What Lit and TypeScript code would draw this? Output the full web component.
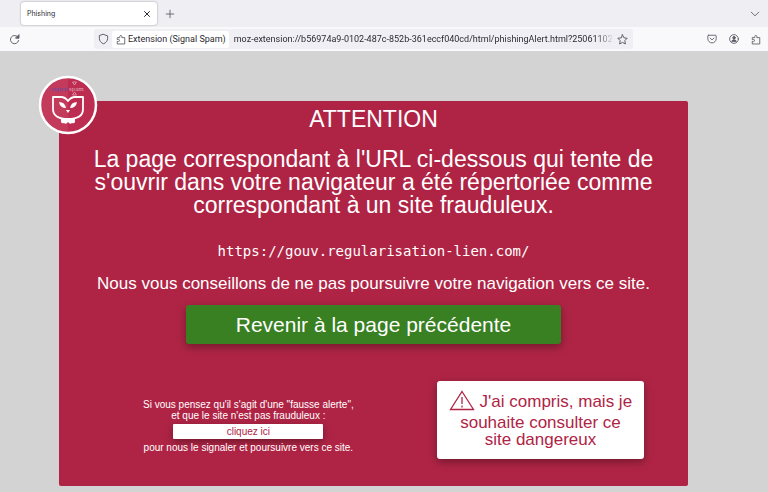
import { LitElement, html, css, svg } from "lit";
import { customElement } from "lit/decorators.js";

const puzzle = svg`<path d="M2 14.500v-3.500h2.200a1.500 1.500 0 0 0 0-3H2V5h4V3.300a1.700 1.700 0 0 1 3.400 0V5H14v9.500z" />`;

@customElement("browser-chrome")
class BrowserChrome extends LitElement {
  static styles = css`
    :host {
      display: block;
      font-family: Roboto, "Liberation Sans", sans-serif;
      color: #2b2a33;
    }
    button {
      border: 0;
      padding: 0;
      background: none;
      color: inherit;
      font: inherit;
      display: flex;
      align-items: center;
      justify-content: center;
    }
    svg {
      display: block;
      fill: none;
      stroke: #5b5b66;
      stroke-width: 1.4;
      stroke-linejoin: round;
      stroke-linecap: round;
    }
    .tabs {
      display: flex;
      align-items: center;
      height: 27px;
      padding: 0 8px 0 21px;
      background: #efeef3;
    }
    .tab {
      display: flex;
      align-items: center;
      justify-content: space-between;
      width: 136px;
      height: 23px;
      box-sizing: border-box;
      padding: 0 6px;
      border-radius: 3px;
      background: #fff;
      box-shadow: 0 0 2px rgba(0, 0, 0, 0.4);
      font-family: Inter, sans-serif;
      font-size: 7px;
    }
    .close {
      stroke: #2b2a33;
      stroke-width: 2;
    }
    .add {
      margin: 0 auto 0 8px;
    }
    .bar {
      display: flex;
      align-items: center;
      height: 24px;
      padding: 0 7px 0 9px;
      background: #f9f9fb;
    }
    .address {
      display: flex;
      align-items: center;
      flex: 1;
      min-width: 0;
      height: 20px;
      margin: 0 74px;
      padding: 0 5px 0 4px;
      gap: 3px;
      border-radius: 3px;
      background: #f0f0f4;
      font-size: 9px;
    }
    .badge {
      flex: none;
      height: 17px;
      gap: 2px;
      margin-right: 2px;
      padding: 0 3px 0 4px;
      border-radius: 2px;
      background: #fff;
    }
    .url {
      flex: 1;
      min-width: 0;
      border: 0;
      padding: 0;
      background: none;
      color: #2b2a33;
      font: inherit;
      outline: 0;
      -webkit-mask-image: linear-gradient(to left, transparent, #000 18px);
      mask-image: linear-gradient(to left, transparent, #000 18px);
    }
    .tools {
      display: flex;
      gap: 12px;
    }
  `;

  render() {
    return html`
      <div class="tabs">
        <div class="tab">
          <span>Phishing</span>
          <button aria-label="Fermer l'onglet">
            <svg class="close" width="8" height="8" viewBox="0 0 16 16"><path d="M3 3l10 10M13 3L3 13" /></svg>
          </button>
        </div>
        <button class="add" aria-label="Nouvel onglet">
          <svg width="10" height="10" viewBox="0 0 16 16"><path d="M8 2v12M2 8h12" /></svg>
        </button>
        <button aria-label="Lister les onglets">
          <svg width="10" height="10" viewBox="0 0 16 16"><path d="M2 5l6 6 6-6" /></svg>
        </button>
      </div>
      <div class="bar">
        <button aria-label="Actualiser">
          <svg width="11" height="11" viewBox="0 0 16 16"><path d="M14 9.500A6 6 0 1 1 12.500 4" /><path d="M14.500 1.500V6H10z" fill="#5b5b66" /></svg>
        </button>
        <div class="address">
          <button aria-label="Protection">
            <svg width="11" height="12" viewBox="0 0 16 16"><path d="M8 1.300L14 3.500V7c0 4-2.500 6.500-6 8C4.500 13.500 2 11 2 7V3.500z" /></svg>
          </button>
          <button class="badge">
            <svg width="10" height="11" viewBox="0 0 16 16">${puzzle}</svg>
            <span>Extension (Signal Spam)</span>
          </button>
          <input
            class="url"
            aria-label="Adresse"
            value="moz-extension://b56974a9-0102-487c-852b-361eccf040cd/html/phishingAlert.html?2506110274"
          />
          <button aria-label="Marque-page">
            <svg width="11" height="11" viewBox="0 0 16 16"><path d="M8 1.200l2.100 4.400 4.700.6-3.400 3.400.8 4.900L8 12.200l-4.200 2.300.8-4.900L1.200 6.200l4.700-.6z" /></svg>
          </button>
        </div>
        <div class="tools">
          <button aria-label="Pocket">
            <svg width="10" height="10" viewBox="0 0 16 16"><path d="M2.500 2h11a1.200 1.200 0 0 1 1.200 1.200V7.500a6.700 6.700 0 0 1-13.400 0V3.200A1.200 1.200 0 0 1 2.500 2z" /><path d="M5 6.500l3 3 3-3" /></svg>
          </button>
          <button aria-label="Compte">
            <svg width="10" height="10" viewBox="0 0 16 16"><circle cx="8" cy="8" r="7" /><circle cx="8" cy="6" r="2" fill="#5b5b66" /><path d="M4.500 11.500c0-3 7-3 7 0z" fill="#5b5b66" /></svg>
          </button>
          <button aria-label="Extensions">
            <svg width="10" height="11" viewBox="0 0 16 16">${puzzle}</svg>
          </button>
        </div>
      </div>
    `;
  }
}

@customElement("app-root")
class AppRoot extends LitElement {
  static styles = css`
    :host {
      display: block;
      min-height: 100vh;
      background: #d3d3d3;
      font-family: "Liberation Sans", Arial, sans-serif;
    }
    main {
      padding: 50px 80px 6px 59px;
    }
    .card {
      position: relative;
      display: flex;
      flex-direction: column;
      align-items: center;
      padding: 7px 32px 27px;
      border-radius: 2px;
      background: #af2445;
      color: #fff;
      text-align: center;
    }
    .logo {
      position: absolute;
      left: -21px;
      top: -26px;
      width: 60px;
      height: 60px;
    }
    h1,
    .lead {
      margin: 0;
      font-size: 23px;
      line-height: 23px;
      font-weight: 400;
    }
    .lead {
      margin-top: 17px;
    }
    .site {
      margin: 26px 0 0;
      font: 14px/16px "DejaVu Sans Mono", monospace;
    }
    .advice {
      margin: 15px 0 0;
      font-size: 17px;
      line-height: 20px;
    }
    button {
      border: 0;
      font-family: inherit;
      box-shadow: 0 3px 8px rgba(0, 0, 0, 0.35);
    }
    .back {
      width: 100%;
      max-width: 375px;
      height: 39px;
      margin-top: 11px;
      border-radius: 3px;
      background: #388021;
      color: #fff;
      font-size: 21px;
    }
    .choices {
      align-self: stretch;
      display: flex;
      justify-content: space-between;
      margin-top: 37px;
      padding: 0 12px 0 52px;
    }
    .report {
      margin-top: 18px;
      font-size: 10px;
      line-height: 11px;
    }
    .report p {
      margin: 0;
    }
    .here {
      width: 150px;
      height: 15px;
      margin: 3px 0;
      padding: 0;
      border-radius: 1px;
      background: #fff;
      color: #af2445;
      font-size: 10px;
    }
    .proceed {
      width: 207px;
      height: 78px;
      padding: 0 8px 2px;
      border-radius: 3px;
      background: #fff;
      color: #af2445;
      font-size: 17px;
      line-height: 17px;
    }
    .warning {
      vertical-align: -7px;
    }
  `;

  render() {
    return html`
      <browser-chrome></browser-chrome>
      <main>
        <section class="card">
          <svg class="logo" viewBox="0 0 60 60" role="img" aria-label="Signal Spam">
            <circle cx="30" cy="30" r="28" fill="#bd2d51" />
            <path d="M30 2a28 28 0 0 0 0 56z" fill="#c43a5b" />
            <circle cx="30" cy="30" r="28" fill="none" stroke="#fff" stroke-width="2.500" />
            <text x="13" y="16" font-family="Liberation Serif, serif" font-size="7" fill="#5f4fa5">signal</text>
            <text x="31" y="16" font-family="Liberation Serif, serif" font-size="7" fill="#e0a5b8">spam</text>
            <path d="M34.500 7h4l-2 3zM36.500 17l2 3h-4z" fill="none" stroke="#e0a5b8" stroke-width="0.800" />
            <path d="M15 22h8q4 0 7 4 3-4 7-4h8v12c0 7-6 10-15 10S15 41 15 34z" fill="none" stroke="#fff" stroke-width="1.800" stroke-linejoin="round" />
            <path d="M21 27q6 0 7 6-6 0-7-6zM39 27q-6 0-7 6 6 0 7-6zM28 35h4l-2 3z" fill="#fff" />
            <path d="M23 43q7 2 14 0v4q-1 2-3 1-2 2-4-1-2 3-4 1-2 1-3-1z" fill="#fff" />
          </svg>
          <h1>ATTENTION</h1>
          <p class="lead">
            La page correspondant à l'URL ci-dessous qui tente de s'ouvrir dans votre navigateur a été répertoriée comme
            correspondant à un site frauduleux.
          </p>
          <p class="site">https://gouv.regularisation-lien.com/</p>
          <p class="advice">Nous vous conseillons de ne pas poursuivre votre navigation vers ce site.</p>
          <button class="back">Revenir à la page précédente</button>
          <div class="choices">
            <div class="report">
              <p>Si vous pensez qu'il s'agit d'une "fausse alerte",<br />et que le site n'est pas frauduleux :</p>
              <button class="here">cliquez ici</button>
              <p>pour nous le signaler et poursuivre vers ce site.</p>
            </div>
            <button class="proceed">
              <svg class="warning" width="26" height="24" viewBox="0 0 26 24" fill="none" stroke="#af2445" stroke-width="1.300" aria-hidden="true">
                <path d="M13 1.500L24.500 19.500h-23z" />
                <path d="M13 7v7M13 15.500v2" stroke-width="1.300" />
              </svg>
              J'ai compris, mais je souhaite consulter ce site dangereux
            </button>
          </div>
        </section>
      </main>
    `;
  }
}
